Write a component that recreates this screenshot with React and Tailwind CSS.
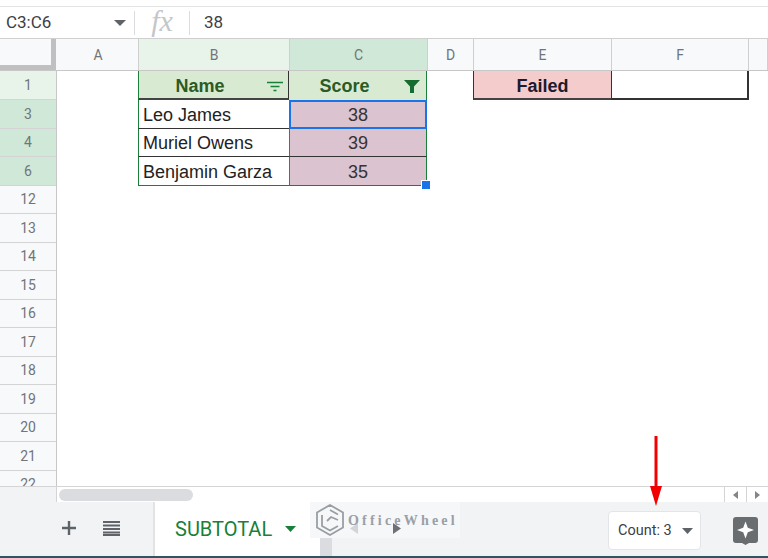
import React from "react";

const F = { fontFamily: '"Roboto","Liberation Sans",sans-serif' };
const A = { fontFamily: '"Liberation Sans",Arial,sans-serif' };
const cols = [
  ["A", "w-[81px] bg-[#f8f9fa]"],
  ["B", "w-[151px] bg-[#e8f3ea]"],
  ["C", "w-[138px] bg-[#d0e8d8]"],
  ["D", "w-[46px] bg-[#f8f9fa]"],
  ["E", "w-[138px] bg-[#f8f9fa]"],
  ["F", "w-[137px] bg-[#f8f9fa]"],
  ["", "flex-1 bg-[#f8f9fa]"],
];
const rowNums = [
  ["1", "bg-[#e8f3ea]", "h-[29px]"],
  ["3", "bg-[#d0e8d8]", "h-[29px]"],
  ["4", "bg-[#d0e8d8]", "h-[28px]"],
  ["6", "bg-[#d0e8d8]", "h-[29px]"],
  ["12", "", "h-[28px]"],
  ["13", "", "h-[29px]"],
  ["14", "", "h-[28px]"],
  ["15", "", "h-[29px]"],
  ["16", "", "h-[28px]"],
  ["17", "", "h-[29px]"],
  ["18", "", "h-[28px]"],
  ["19", "", "h-[29px]"],
  ["20", "", "h-[28px]"],
  ["21", "", "h-[29px]"],
  ["22", "", "h-[28px]"],
];
const people = [
  ["Leo James", "38", "h-[29px]"],
  ["Muriel Owens", "39", "h-[28px]"],
  ["Benjamin Garza", "35", "h-[29px]"],
];

export default function App() {
  return (
    <div className="relative w-[768px] h-[558px] overflow-hidden bg-white flex flex-col" style={F}>
      <div className="h-[7px] border-b border-[#e3e3e3]" />
      <div className="h-[32px] flex items-center border-b border-[#cfcfcf] shrink-0">
        <div className="w-[135px] h-[24px] flex items-center justify-between border-r border-[#dadce0] pl-[6px] pr-[8px] text-[17px] text-[#3c4043]">
          <span>C3:C6</span>
          <svg width="12" height="6" viewBox="0 0 12 6"><path d="M0 0h12L6 6z" fill="#5f6368" /></svg>
        </div>
        <div className="w-[55px] h-[24px] flex items-center justify-center border-r border-[#dadce0] text-[30px] italic text-[#c4c7ca] pb-[4px]" style={{ fontFamily: '"Liberation Serif",serif' }}>fx</div>
        <div className="pl-[14px] text-[17px] text-[#3c4043]">38</div>
      </div>
      <div className="h-[32px] flex shrink-0 border-b border-[#c7c7c7]">
        <div className="w-[56px] bg-[#f8f9fa] border-r-[5px] border-b-[5px] border-[#c0c0c0]" />
        <div className="w-[2px] bg-[#f8f9fa]" />
        {cols.map(([c, k], i) => (
          <div key={i} className={`${k} flex items-center justify-center border-r border-[#cfcfcf] text-[14px] text-[#70757a] pt-[1px]`}>{c}</div>
        ))}
      </div>
      <div className="h-[415px] flex shrink-0 overflow-hidden">
        <div className="w-[57px] shrink-0 flex flex-col border-r border-[#c7c7c7] bg-[#f8f9fa]">
          {rowNums.map(([n, k, h]) => (
            <div key={n} className={`${h} ${k} shrink-0 flex items-center justify-center border-b border-[#d4d4d4] text-[14px] text-[#70757a]`}>{n}</div>
          ))}
        </div>
        <div className="flex flex-col" style={A}>
          <div className="flex h-[29px]">
            <div className="w-[81px]" />
            <div className="w-[151px] h-[29px] relative flex items-center justify-center bg-[#d9ead3] border-l border-[#188038] border-r-[1.5px] border-r-[#333] border-b-2 border-b-[#434343] text-[18px] font-bold text-[#2c5a24] pr-[27px] pt-[3px]">
              Name
              <svg className="absolute right-[5px] top-[10px]" width="16" height="11" viewBox="0 0 16 11" fill="none" stroke="#188038" strokeWidth="1.4"><path d="M0 1.500h16M3.500 5.500h9M6.500 9.500h3" /></svg>
            </div>
            <div className="w-[138px] h-[29px] relative flex items-center justify-center bg-[#d9ead3] border-r border-[#188038] text-[18px] font-bold text-[#2c5a24] pr-[26px] pt-[2px]">
              Score
              <svg className="absolute right-[6px] top-[9px]" width="16" height="13" viewBox="0 0 16 13"><path d="M0 0h16L10 6.500V13H6V6.500z" fill="#146c2e" /></svg>
            </div>
            <div className="w-[46px]" />
            <div className="w-[138px] h-[29px] flex items-center justify-center bg-[#f4cccc] border-l border-[#333] border-b-2 border-b-[#434343] text-[18px] font-bold text-[#1f1a2e] pt-[3px]">Failed</div>
            <div className="w-[138px] h-[29px] bg-white border-l border-r-2 border-b-2 border-[#333]" />
          </div>
          <div className="flex">
            <div className="w-[81px]" />
            <div className="relative flex flex-col">
              {people.map(([name, score, h], i) => (
                <div key={name} className={`flex ${h}`}>
                  <div className={`w-[151px] flex items-center pl-[4px] pt-[2px] border-l border-[#188038] text-[18px] text-[#222] ${i === 2 ? "border-b border-b-[#188038]" : "border-b border-b-[#333]"}`}>{name}</div>
                  <div className={`w-[138px] flex items-center justify-center pt-[2px] bg-[#dcc3d0] text-[18px] text-[#333] border-l border-l-[#1a73e8] border-r border-r-[#188038] ${i === 2 ? "border-b border-b-[#188038]" : "border-b border-b-[#333]"}`}>{score}</div>
                </div>
              ))}
              <div className="absolute left-[151px] top-0 w-[138px] h-[29px] border-2 border-[#1a73e8]" />
              <div className="absolute left-[283px] top-[80px] w-[10px] h-[10px] bg-[#1a73e8] border border-white" />
            </div>
          </div>
        </div>
      </div>
      <div className="h-[16px] flex shrink-0 border-t border-[#d4d4d4] relative">
        <div className="w-[57px] bg-[#f1f3f4] border-r border-[#d4d4d4]" />
        <div className="flex-1 flex items-center pl-[2px]">
          <div className="w-[134px] h-[12px] rounded-full bg-[#dadce0]" />
        </div>
        <div className="w-[22px] flex items-center justify-center border-l border-[#d4d4d4]">
          <svg width="5" height="8" viewBox="0 0 5 8"><path d="M5 0v8L0 4z" fill="#80868b" /></svg>
        </div>
        <div className="w-[22px] flex items-center justify-center border-l border-[#d4d4d4]">
          <svg width="5" height="8" viewBox="0 0 5 8"><path d="M0 0v8l5-4z" fill="#80868b" /></svg>
        </div>
      </div>
      <div className="flex-1 flex items-stretch bg-[#f1f3f4] relative border-b-2 border-[#2f5560]">
        <div className="w-[153px] flex items-center pl-[62px] gap-[27px] pb-[2px]">
          <svg width="14" height="14" viewBox="0 0 14 14"><path d="M7 0v14M0 7h14" stroke="#5f6368" strokeWidth="2.400" /></svg>
          <svg width="17" height="15" viewBox="0 0 17 15"><path d="M0 1h17M0 4.500h17M0 8h17M0 11.500h17M0 14h17" stroke="#5f6368" strokeWidth="1.800" /></svg>
        </div>
        <div className="w-[167px] bg-white border-l-2 border-[#e2e3e5] flex items-center pl-[20px] gap-[13px] text-[20px] text-[#188038]">
          <span>SUBTOTAL</span>
          <svg width="11" height="6" viewBox="0 0 11 6"><path d="M0 0h11L5.500 6z" fill="#188038" /></svg>
        </div>
        <div className="w-[12px] bg-[#dadce0]" />
        <div className="flex-1" />
        <div className="absolute left-[310px] top-0 flex items-center h-[36px] w-[150px] bg-[#f6f7f8] pl-[5px]">
          <svg className="absolute left-[40px] top-[21px]" width="8" height="11" viewBox="0 0 8 11"><path d="M8 0v11L0 5.500z" fill="#d2d4d7" /></svg>
          <svg className="absolute left-[83px] top-[21px]" width="8" height="11" viewBox="0 0 8 11"><path d="M0 0v11l8-5.500z" fill="#6d7175" /></svg>
          <svg width="30" height="32" viewBox="0 0 30 32" fill="none" stroke="#9a9ea3" strokeWidth="1.800"><path d="M15 1l13 7.500v15L15 31 2 23.500v-15zM7 11v11l8 4.500 8-4.500M12 17l4-4 7 3M15 6l8 4.500" /></svg>
          <span className="relative ml-[3px] text-[14px] tracking-[3.2px] text-[#9aa0a6] font-bold" style={{ fontFamily: '"Liberation Serif",serif' }}>OfficeWheel</span>
        </div>
        <div className="absolute left-[608px] top-[9px] w-[93px] h-[39px] bg-white rounded-[4px] border border-[#e3e5e8] flex items-center pl-[9px] gap-[10px] text-[14.500px] text-[#3c4043]">
          <span>Count: 3</span>
          <svg width="11" height="6" viewBox="0 0 11 6"><path d="M0 0h11L5.500 6z" fill="#5f6368" /></svg>
        </div>
        <svg className="absolute left-[733px] top-[15px]" width="25" height="28" viewBox="0 0 25 28">
          <path d="M3 0h19a3 3 0 0 1 3 3v20a3 3 0 0 1-3 3h-6l-3.500 2L9 26H3a3 3 0 0 1-3-3V3a3 3 0 0 1 3-3z" fill="#6a6d70" />
          <path d="M12.500 4.500l2.300 6.200 6.200 2.300-6.200 2.300-2.300 6.200-2.300-6.200L4 13l6.200-2.300z" fill="#fff" />
        </svg>
      </div>
      <svg className="absolute left-[648px] top-[436px]" width="16" height="72" viewBox="0 0 16 72">
        <path d="M8 0v54" stroke="#f00000" strokeWidth="3" />
        <path d="M2 50h12l-6 20z" fill="#f00000" />
      </svg>
    </div>
  );
}
